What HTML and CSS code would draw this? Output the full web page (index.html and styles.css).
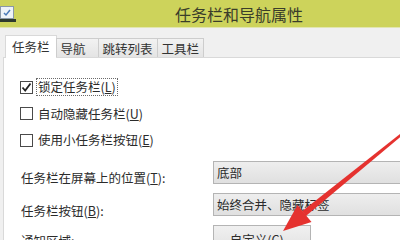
FILE: index.html
```html
<!doctype html>
<html lang="zh-CN">
<head>
    <meta charset="UTF-8">
    <title>任务栏和导航属性</title>
    <link rel="stylesheet" href="styles.css">
</head>
<body>
<div class="window">
    <div class="titlebar">
        <svg class="app-icon" width="16" height="17" viewBox="0 0 16 17">
            <rect x="0.5" y="0.5" width="13" height="12" fill="#eef3f8" stroke="#8a98a8"/>
            <path d="M4 7 L6 9 L10 4" fill="none" stroke="#4a7ab8" stroke-width="1.5"/>
            <rect x="0" y="13" width="16" height="3" fill="#2e3a2e"/>
        </svg>
        <span class="title">任务栏和导航属性</span>
    </div>

    <div class="tabs">
        <div class="tab active">任务栏</div>
        <div class="tab tab-nav">导航</div>
        <div class="tab">跳转列表</div>
        <div class="tab">工具栏</div>
    </div>

    <div class="panel">
        <div class="checks">
            <div class="check">
                <span class="box">
                    <svg width="11" height="11" viewBox="0 0 11 11"><path d="M1.5 5.5 L4.2 8.5 L9.5 1.5" fill="none" stroke="#222" stroke-width="1.8"/></svg>
                </span>
                <span class="check-text focus">锁定任务栏(<u>L</u>)</span>
            </div>
            <div class="check">
                <span class="box"></span>
                <span class="check-text">自动隐藏任务栏(<u>U</u>)</span>
            </div>
            <div class="check">
                <span class="box"></span>
                <span class="check-text">使用小任务栏按钮(<u>E</u>)</span>
            </div>
        </div>

        <div class="fields">
            <div class="field">
                <span class="field-label pos">任务栏在屏幕上的位置(<u>T</u>):</span>
                <div class="select">底部</div>
            </div>
            <div class="field">
                <span class="field-label btns">任务栏按钮(<u>B</u>):</span>
                <div class="select">始终合并、隐藏标签</div>
            </div>
            <div class="field">
                <span class="field-label notify">通知区域:</span>
                <div class="button">自定义(<u>C</u>)...</div>
            </div>
        </div>
    </div>

    <svg class="arrow" width="400" height="240" viewBox="0 0 400 240">
        <polygon points="402.8,134.9 401.2,133.1 302.1,211.3 305.9,215.9" fill="#e5322f"/>
        <polygon points="283,231 297.5,205 311.5,222" fill="#e5322f"/>
    </svg>
</div>
</body>
</html>
```

FILE: styles.css
```css
body{
    margin: 0;
    padding: 0;
    width: 400px;
    height: 240px;
    overflow: hidden;
    background-color: #f0f0f0;
    font-family: "Noto Sans CJK SC", "Liberation Sans", sans-serif;
    color: #2b2b2b;
}
.window
{
    position: relative;
    width: 400px;
    height: 240px;
    overflow: hidden;
}
.titlebar
{
    display: flex;
    align-items: center;
    height: 27px;
    background-color: #cdd35b;
    border-bottom: 1px solid #e2e6b0;
}
.app-icon
{
    margin-top: 2px;
    flex: none;
}
.title
{
    margin-left: 159px;
    font-size: 16px;
    line-height: 20px;
    color: #3a3d2a;
    white-space: nowrap;
}
.tabs
{
    display: flex;
    align-items: flex-end;
    height: 29px;
    padding-left: 5px;
    position: relative;
    z-index: 1;
}
.tab
{
    height: 18px;
    padding: 0 4px;
    border: 1px solid #cdcdcd;
    border-bottom: none;
    margin-left: -1px;
    background: linear-gradient(#f2f2f2, #e4e4e4);
    font-size: 12.5px;
    line-height: 19px;
    white-space: nowrap;
    color: #333;
}
.tab.active
{
    height: 22px;
    margin-left: 0;
    margin-bottom: -1px;
    padding: 0 6px;
    background: #ffffff;
    border-color: #d9d9d9;
    line-height: 21px;
}
.tab-nav
{
    padding-right: 12px;
}
.panel
{
    margin-left: 3px;
    width: 420px;
    height: 200px;
    background-color: #ffffff;
    border-top: 1px solid #d9d9d9;
    border-left: 1px solid #d9d9d9;
    padding: 16px 0 0 16px;
}
.checks
{
    display: flex;
    flex-direction: column;
}
.check
{
    display: flex;
    align-items: center;
    height: 26.5px;
}
.box
{
    width: 11px;
    height: 11px;
    border: 1px solid #4a4a4a;
    background: #ffffff;
    display: flex;
    align-items: center;
    justify-content: center;
}
.check-text
{
    margin-left: 3px;
    font-size: 12.5px;
    line-height: 16px;
    padding: 0 1px;
    border: 1px solid transparent;
    white-space: nowrap;
}
.check-text.focus
{
    border: 1px dotted #6a6a6a;
}
.fields
{
    display: flex;
    flex-direction: column;
    gap: 9px;
    margin-top: 7px;
}
.field
{
    display: flex;
    align-items: flex-start;
    height: 23px;
}
.field-label
{
    width: 192px;
    flex: none;
    font-size: 12.5px;
    line-height: 16px;
    padding-left: 1px;
    white-space: nowrap;
}
.field-label.pos
{
    padding-top: 9px;
}
.field-label.btns
{
    padding-top: 10px;
}
.field-label.notify
{
    padding-top: 8px;
}
.select
{
    width: 220px;
    height: 21px;
    border: 1px solid #b4b4b4;
    background: linear-gradient(#eeeeee, #e0e0e0);
    font-size: 12.5px;
    line-height: 21px;
    padding-left: 3px;
    white-space: nowrap;
}
.button
{
    width: 96px;
    height: 24px;
    border: 1px solid #b4b4b4;
    background: linear-gradient(#f0f0f0, #e2e2e2);
    font-size: 12.5px;
    line-height: 27px;
    text-align: center;
    white-space: nowrap;
}
.arrow
{
    position: absolute;
    top: 0;
    left: 0;
    pointer-events: none;
    filter: blur(0.5px);
    z-index: 2;
}
```
